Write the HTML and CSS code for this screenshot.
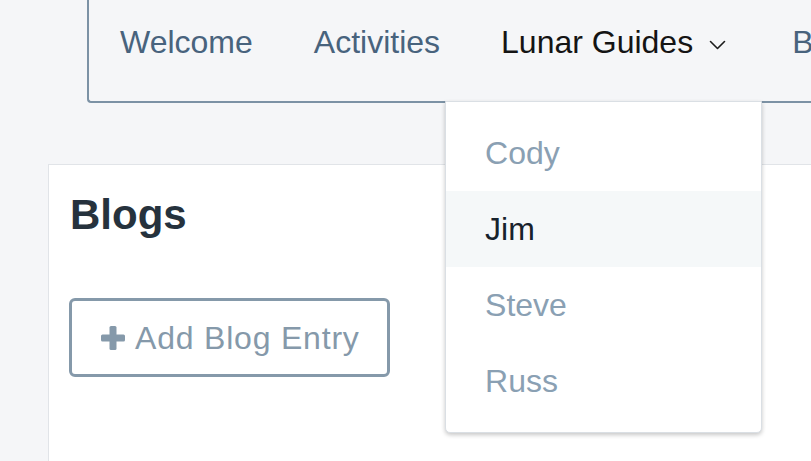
FILE: index.html
```html
<!DOCTYPE html>
<html lang="en">
<head>
<meta charset="utf-8">
<title>Blogs</title>
<link rel="stylesheet" href="styles.css">
</head>
<body>
  <header class="topbar">
    <ul class="nav">
      <li class="nav-item"><a class="nav-link" href="#">Welcome</a></li>
      <li class="nav-item"><a class="nav-link" href="#">Activities</a></li>
      <li class="nav-item nav-item--open">
        <a class="nav-link nav-link--active" href="#">Lunar Guides
          <svg class="chevron" width="17" height="10" viewBox="0 0 17 10" aria-hidden="true">
            <polyline points="1.5,1.5 8.5,8.5 15.5,1.5" fill="none" stroke="#1c1c1c" stroke-width="1.6" stroke-linecap="round" stroke-linejoin="round"/>
          </svg>
        </a>
        <ul class="dropdown">
          <li class="dropdown-item">Cody</li>
          <li class="dropdown-item dropdown-item--hover">Jim</li>
          <li class="dropdown-item">Steve</li>
          <li class="dropdown-item">Russ</li>
        </ul>
      </li>
      <li class="nav-item"><a class="nav-link" href="#">Blogs</a></li>
    </ul>
  </header>

  <main class="main">
    <section class="card">
      <h1 class="card-title">Blogs</h1>
      <button class="btn-outline" type="button">
        <svg class="plus" width="24" height="24" viewBox="0 0 24 24" aria-hidden="true">
          <rect x="0" y="8.5" width="24" height="7" rx="1.5" fill="#8599aa"/>
          <rect x="8.5" y="0" width="7" height="24" rx="1.5" fill="#8599aa"/>
        </svg>
        <span class="btn-label">Add Blog Entry</span>
      </button>
    </section>
  </main>
</body>
</html>
```

FILE: styles.css
```css
* {
  box-sizing: border-box;
}

html, body {
  margin: 0;
  padding: 0;
}

body {
  background: #f5f6f8;
  font-family: "Liberation Sans", Arial, Helvetica, sans-serif;
  overflow: hidden;
  width: 811px;
  height: 461px;
}

.topbar {
  margin-left: 87px;
  height: 103px;
  border-left: 2px solid #7c92a5;
  border-bottom: 2px solid #7c92a5;
  border-bottom-left-radius: 4px;
  position: relative;
  z-index: 2;
}

.nav {
  list-style: none;
  margin: 0;
  padding: 0 0 0 31px;
  display: flex;
  gap: 61px;
  height: 101px;
  white-space: nowrap;
}

.nav-item {
  position: relative;
  padding-top: 24px;
  height: 101px;
}

.nav-link {
  display: flex;
  align-items: center;
  font-size: 32px;
  line-height: 37px;
  color: #48637d;
  text-decoration: none;
}

.nav-link--active {
  color: #141414;
}

.chevron {
  margin-left: 16px;
  margin-right: 5px;
  margin-top: 5px;
}

.dropdown {
  position: absolute;
  top: 100%;
  left: -56px;
  width: 317px;
  margin: 0;
  padding: 13px 0;
  list-style: none;
  background: #ffffff;
  border: 1px solid #dadfe4;
  border-radius: 0 0 5px 5px;
  box-shadow: 0 2px 4px rgba(0, 0, 0, 0.22);
}

.dropdown-item {
  height: 76px;
  line-height: 76px;
  padding-left: 39px;
  font-size: 32px;
  color: #8aa0b3;
}

.dropdown-item--hover {
  background: #f5f8f9;
  color: #17222c;
}

.main {
  padding: 61px 0 0 48px;
}

.card {
  background: #ffffff;
  border: 1px solid #e1e4e8;
  margin-right: -40px;
  min-height: 400px;
  padding: 25px 21px;
}

.card-title {
  margin: 0;
  font-size: 42px;
  line-height: 49px;
  font-weight: 700;
  color: #26323d;
}

.btn-outline {
  margin-top: 59px;
  margin-left: -1px;
  width: 321px;
  height: 79px;
  display: flex;
  align-items: center;
  gap: 10px;
  padding: 0 0 0 29px;
  background: #ffffff;
  border: 3px solid #8599aa;
  border-radius: 6px;
  font-family: "Liberation Sans", Arial, Helvetica, sans-serif;
  font-size: 32px;
  color: #8599aa;
}

.btn-label {
  letter-spacing: 0.8px;
  margin-top: 2px;
}

.plus {
  flex: none;
  margin-top: 1px;
}
```
